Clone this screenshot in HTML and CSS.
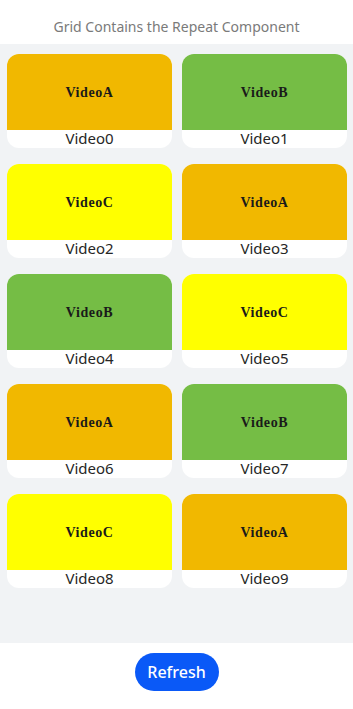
FILE: index.html
```html
<!DOCTYPE html>
<html>
<head>
<meta charset="utf-8">
<link rel="stylesheet" href="styles.css">
</head>
<body>
<div class="page">
  <div class="header">Grid Contains the Repeat Component</div>
  <div class="content">
    <div class="grid">
      <div class="card"><div class="thumb a">VideoA</div><div class="label">Video0</div></div>
      <div class="card"><div class="thumb b">VideoB</div><div class="label">Video1</div></div>
      <div class="card"><div class="thumb c">VideoC</div><div class="label">Video2</div></div>
      <div class="card"><div class="thumb a">VideoA</div><div class="label">Video3</div></div>
      <div class="card"><div class="thumb b">VideoB</div><div class="label">Video4</div></div>
      <div class="card"><div class="thumb c">VideoC</div><div class="label">Video5</div></div>
      <div class="card"><div class="thumb a">VideoA</div><div class="label">Video6</div></div>
      <div class="card"><div class="thumb b">VideoB</div><div class="label">Video7</div></div>
      <div class="card"><div class="thumb c">VideoC</div><div class="label">Video8</div></div>
      <div class="card"><div class="thumb a">VideoA</div><div class="label">Video9</div></div>
    </div>
  </div>
  <div class="footer"><button class="refresh">Refresh</button></div>
</div>
</body>
</html>
```
FILE: styles.css
```css
html, body {
  margin: 0;
  padding: 0;
  background: #ffffff;
}
.page {
  width: 353px;
  height: 709px;
  display: flex;
  flex-direction: column;
  font-family: "Noto Sans", "Open Sans", sans-serif;
}
.header {
  height: 44px;
  display: flex;
  align-items: center;
  justify-content: center;
  padding-top: 8px;
  box-sizing: border-box;
  font-size: 14px;
  color: #7a7a7a;
  background: #ffffff;
}
.content {
  height: 599px;
  background: #f1f3f5;
  padding: 10px 6px 0 7px;
  box-sizing: border-box;
}
.grid {
  display: grid;
  grid-template-columns: 165px 165px;
  column-gap: 10px;
  row-gap: 16px;
}
.card {
  height: 94px;
  background: #ffffff;
  border-radius: 12px;
  overflow: hidden;
  display: flex;
  flex-direction: column;
}
.thumb {
  height: 76px;
  display: flex;
  align-items: center;
  justify-content: center;
  font-family: "Liberation Serif", "DejaVu Serif", serif;
  font-weight: bold;
  font-size: 14px;
  letter-spacing: 0.6px;
  color: #1a1a1a;
  padding-top: 2px;
  box-sizing: border-box;
}
.thumb.a { background: #f1b800; }
.thumb.b { background: #75bd45; }
.thumb.c { background: #ffff00; }
.label {
  flex: 1;
  display: flex;
  align-items: center;
  justify-content: center;
  font-size: 15px;
  color: #262626;
  line-height: 1;
  padding-bottom: 1px;
}
.footer {
  flex: 1;
  display: flex;
  justify-content: center;
  padding-top: 10px;
  box-sizing: border-box;
  background: #ffffff;
}
.refresh {
  width: 84px;
  height: 38px;
  border: none;
  border-radius: 19px;
  background: #0a59f7;
  color: #ffffff;
  font-family: "Noto Sans", "Open Sans", sans-serif;
  font-size: 16px;
  font-weight: 500;
  padding: 0;
}
```
